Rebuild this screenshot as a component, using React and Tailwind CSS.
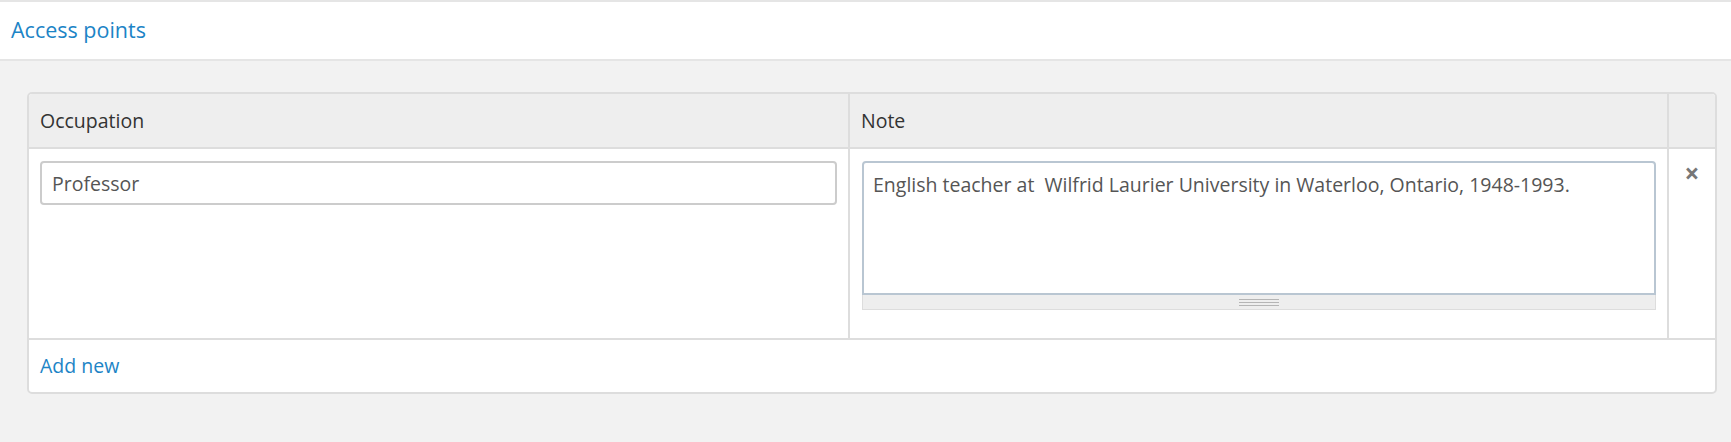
import React from 'react';

const ink = 'text-[#333333]';

function Grip() {
  // drupal-style textarea grippie under the note field
  return (
    <div className="flex h-[15px] items-center justify-center border border-t-0 border-[#dddddd] bg-[#eeeeee]">
      <div className="flex w-[40px] flex-col gap-[2px]">
        <div className="h-px bg-[#b5b5b5]" />
        <div className="h-px bg-[#b5b5b5]" />
        <div className="h-px bg-[#b5b5b5]" />
      </div>
    </div>
  );
}

export default function App() {
  return (
    <div className="min-h-[442px] bg-[#f2f2f2] font-['Open_Sans',sans-serif]">
      {/* page section title */}
      <div className="flex h-[61px] items-center border-t-2 border-b-2 border-[#e5e5e5] bg-white pl-[11px]">
        <a className="text-[21.5px] text-[#1c84c6]" href="#">Access points</a>
      </div>

      <div className="pl-[27px] pr-[14px] pt-[31px]">
        <div className="overflow-hidden rounded-[5px] border-2 border-[#dddddd] bg-white">
          {/* table head */}
          <div className="grid grid-cols-[1fr_1fr_48px] border-b-2 border-[#dddddd] bg-[#eeeeee]">
            <div className={`flex h-[53px] items-center pl-[11px] text-[19.5px] ${ink}`}>Occupation</div>
            <div className={`flex h-[53px] items-center border-l-2 border-[#dddddd] pl-[11px] text-[19.5px] ${ink}`}>Note</div>
            <div className="border-l-2 border-[#dddddd]" />
          </div>

          {/* single row */}
          <div className="grid grid-cols-[1fr_1fr_48px] border-b-2 border-[#dddddd]">
            <div className="px-[11px] pt-[12px]">
              <input
                className="h-[44px] w-full rounded-[4px] border-2 border-[#cccccc] px-[10px] text-[19.5px] text-[#555555] outline-none"
                defaultValue="Professor"
                readOnly
              />
            </div>
            <div className="border-l-2 border-[#dddddd] pl-[12px] pr-[11px] pt-[12px] pb-[28px]">
              <textarea
                className="block h-[134px] w-full resize-none rounded-t-[4px] border-2 border-[#b9c6d2] px-[9px] pt-[9px] text-[19.5px] leading-[26px] text-[#555555] outline-none"
                defaultValue="English teacher at  Wilfrid Laurier University in Waterloo, Ontario, 1948-1993."
                readOnly
              />
              <Grip />
            </div>
            <div className="flex items-start justify-center border-l-2 border-[#dddddd] pt-[11px]">
              <button className="text-[26px] font-bold leading-[26px] text-[#777777]">×</button>
            </div>
          </div>

          {/* footer */}
          <div className="flex h-[52px] items-center pl-[11px]">
            <a className="text-[19.5px] text-[#1c84c6]" href="#">Add new</a>
          </div>
        </div>
      </div>
    </div>
  );
}
